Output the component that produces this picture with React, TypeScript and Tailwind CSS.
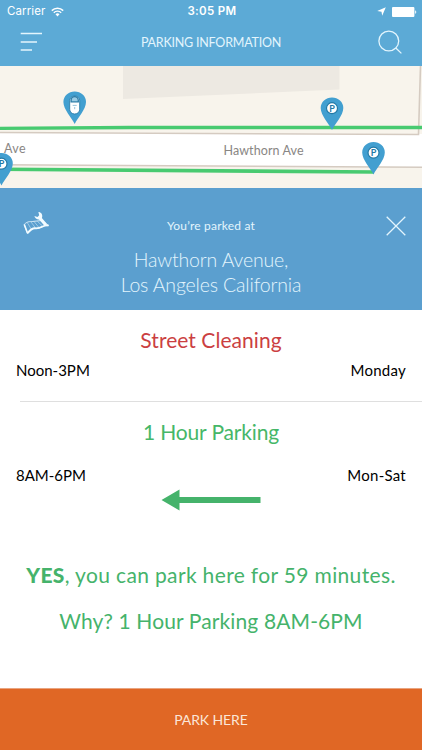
type PinKind = "meter" | "parking";

interface MapPin {
  id: string;
  kind: PinKind;
  x: number;
  y: number;
}

interface Rule {
  title: string;
  hours: string;
  days: string;
  titleClass: string;
}

// x / y are the tip of each pin inside the map
const pins: MapPin[] = [
  { id: "meter", kind: "meter", x: 74.7, y: 58 },
  { id: "north", kind: "parking", x: 332, y: 64 },
  { id: "south", kind: "parking", x: 373.5, y: 108.5 },
  { id: "west", kind: "parking", x: 1.5, y: 119.5 },
];

const cleaning: Rule = {
  title: "Street Cleaning",
  hours: "Noon-3PM",
  days: "Monday",
  titleClass: "text-[#cb3f42] tracking-[0.05px]",
};

const hourly: Rule = {
  title: "1 Hour Parking",
  hours: "8AM-6PM",
  days: "Mon-Sat",
  titleClass: "text-[#46b768] tracking-[-0.15px]",
};

function WifiIcon() {
  return (
    <svg width="13" height="10" viewBox="0 0 13 10" fill="none" stroke="#fff" aria-hidden="true">
      <path d="M0.8 3.6a8.1 8.1 0 0 1 11.4 0" strokeWidth="1.5" />
      <path d="M2.8 5.7a5.2 5.2 0 0 1 7.4 0" strokeWidth="1.4" />
      <path d="M6.5 9.4 4.5 7.3a2.9 2.9 0 0 1 4 0Z" fill="#fff" stroke="none" />
    </svg>
  );
}

function StatusBar() {
  return (
    <div className="grid h-[22px] grid-cols-3 items-center px-[7px] pt-px font-['Inter',sans-serif] text-[11.5px] leading-none text-white">
      <div className="flex items-center gap-[6px]">
        <span className="tracking-[0.1px]">Carrier</span>
        <WifiIcon />
      </div>
      <span className="pl-0.5 text-center font-semibold tracking-[0.35px]">3:05 PM</span>
      <div className="-mr-[2px] flex items-center justify-end gap-[6px]">
        <svg width="9" height="9" viewBox="0 0 9 9" fill="#fff" aria-hidden="true">
          <path d="M8.8 0.2 5.2 8.8 4.5 4.7 0.2 4Z" />
        </svg>
        <svg width="25" height="10" viewBox="0 0 25 10" fill="#fff" aria-hidden="true">
          <rect width="22.4" height="10" rx="1" />
          <path d="M23.2 3.2c1.4.4 1.4 3.2 0 3.6Z" />
        </svg>
      </div>
    </div>
  );
}

function Header() {
  return (
    <header className="h-[66px] shrink-0 bg-[#5caad6]">
      <StatusBar />
      <div className="grid h-10 grid-cols-[40px_1fr_40px] items-center px-5">
        <button type="button" aria-label="Menu">
          <svg width="22" height="20" viewBox="0 0 22 20" stroke="#e3f5fd" strokeWidth="1.5">
            <path d="M0.7 1.6h21.3M0.7 9.9h16.3M0.7 18h11.3" />
          </svg>
        </button>
        <h1 className="pt-0.5 text-center text-[12.5px] tracking-[-0.22px] whitespace-nowrap text-[#e3f5fd]">
          PARKING INFORMATION
        </h1>
        <button type="button" aria-label="Search" className="flex justify-end">
          <svg width="24" height="24" viewBox="0 0 24 24" fill="none" stroke="#e3f5fd" strokeWidth="1.3">
            <circle cx="10.8" cy="11" r="9.9" />
            <path d="m17.8 18 5.6 5.4" />
          </svg>
        </button>
      </div>
    </header>
  );
}

function Pin({ kind, x, y }: Omit<MapPin, "id">) {
  return (
    <g transform={`translate(${x} ${y})`}>
      <path
        d="M0 0C-3-6.500-11.300-14.500-11.300-22A11.300 10.500 0 0 1 11.300-22C11.300-14.500 3-6.500 0 0Z"
        fill="#429fd0"
      />
      {kind === "meter" ? (
        <g>
          <rect x="-5" y="-28" width="10" height="18" rx="4.800" fill="#fff" stroke="#2c7da8" strokeWidth="0.9" />
          <path
            d="M-3.600-22.200v-1.600a3.600 3.600 0 0 1 7.200 0v1.600Z"
            fill="#9acbe4"
            stroke="#2c7da8"
            strokeWidth="1.300"
          />
          <path d="M-2-18.600h4M0-17v2.200" stroke="#8dbdd6" strokeWidth="0.9" />
        </g>
      ) : (
        <g>
          <circle cy="-21.800" r="5.500" fill="#fff" stroke="#2379a5" strokeWidth="1.200" />
          <text
            y="-18.500"
            textAnchor="middle"
            className="fill-[#2379a5] font-['Lato',sans-serif] text-[9px] font-bold"
          >
            P
          </text>
        </g>
      )}
    </g>
  );
}

function StreetMap() {
  return (
    <svg width="422" height="122" viewBox="0 0 422 122" className="block shrink-0" role="img" aria-label="Map">
      <rect width="422" height="122" fill="#f8f4ec" />
      <path d="M123 0H339.500V23.500L123 33Z" fill="#ede9e2" />
      <path d="M0 66 422 68V101L0 98.500Z" fill="#fff" />
      <path d="M0 66.500 418.500 68.500 420.500 0" fill="none" stroke="#d5cbc1" strokeWidth="1.600" />
      <path d="M0 98.700 422 101.200" stroke="#d5cbc1" strokeWidth="1.600" />
      <path d="M0 62.300 130 61.500H422" fill="none" stroke="#48ca70" strokeWidth="3.300" />
      <path d="M0 103.200 374 106" stroke="#48ca70" strokeWidth="3.600" />
      <g className="fill-[#898684] font-['Lato',sans-serif] text-[12.5px]">
        <text x="4" y="87.200" textLength="21.500">Ave</text>
        <text x="223.500" y="88.600" textLength="80">Hawthorn Ave</text>
      </g>
      {pins.map((pin) => (
        <Pin key={pin.id} kind={pin.kind} x={pin.x} y={pin.y} />
      ))}
    </svg>
  );
}

function MapRepairIcon() {
  return (
    <svg width="27" height="24" viewBox="0 0 27 24" fill="none" stroke="#f2fbff" aria-hidden="true">
      <path
        d="M1.200 12.500C5 8.500 8 10 11 9.300L19 8.500 25.500 13.500C20 12.500 18.500 17 12.500 16.300 9 16 7 18.500 4.500 21.500Z"
        strokeWidth="0.800"
      />
      <path d="M4.500 21.300C7 18 9 15.900 12.500 16.300 18.500 17 20 12.300 25.500 13.500" strokeWidth="1.800" />
      <path d="M4.500 11 8.500 17.500M8 10 12.500 16M11 9.500 16 15.500M14.500 9.500 19.500 14" strokeWidth="0.450" />
      <path d="m1.300 12.500 3.300 8.800" strokeWidth="1.600" />
      <path d="m16.800 6 5.400 6.200" strokeWidth="3.200" strokeLinecap="round" />
      <path
        d="M15.300-0.300c3.500.7 4.800 3.600 3.400 6.600-2.700 2.300-6.500 1-7.300-2.300l3.100 1.100 1.700-1.900Z"
        fill="#f2fbff"
        stroke="none"
      />
    </svg>
  );
}

function LocationPanel() {
  return (
    <section className="grid h-[122px] shrink-0 grid-cols-[60px_1fr_60px] bg-[#5b9fcf] text-[#e3f5fd]">
      <div className="pt-[24px] pl-[23px]">
        <MapRepairIcon />
      </div>
      <div className="text-center">
        <p className="pt-[29px] text-[12px] leading-[18px] tracking-[0.2px]">You’re parked at</p>
        <p className="mt-3 text-[19.5px] leading-[25px] font-light tracking-[-0.15px]">
          Hawthorn Avenue,
          <br />
          Los Angeles California
        </p>
      </div>
      <button type="button" aria-label="Close" className="flex items-start justify-end pt-7 pr-4">
        <svg width="20" height="20" viewBox="0 0 20 20" stroke="#e3f5fd" strokeWidth="1.300">
          <path d="m0.700 0.700 18.600 18.600M19.300 0.700.700 19.300" />
        </svg>
      </button>
    </section>
  );
}

function RuleTimes({ hours, days }: Pick<Rule, "hours" | "days">) {
  return (
    <div className="flex justify-between px-4 text-[15px] leading-5 text-black">
      <span>{hours}</span>
      <span className="tracking-[0.25px]">{days}</span>
    </div>
  );
}

export default function App() {
  return (
    <main className="flex h-[750px] w-[422px] flex-col overflow-hidden bg-white font-['Lato',sans-serif]">
      <Header />
      <StreetMap />
      <LocationPanel />

      <section className="flex h-[92px] shrink-0 flex-col text-center">
        <h2 className={`pt-[17px] text-[21px] leading-[26px] ${cleaning.titleClass}`}>{cleaning.title}</h2>
        <div className="pt-[7px]">
          <RuleTimes hours={cleaning.hours} days={cleaning.days} />
        </div>
        <div className="mt-auto ml-5 h-px bg-[#dfdfdf]" />
      </section>

      <section className="flex h-[153px] shrink-0 flex-col text-center">
        <h2 className={`pt-[17px] text-[21px] leading-[26px] ${hourly.titleClass}`}>{hourly.title}</h2>
        <div className="pt-[20px]">
          <RuleTimes hours={hourly.hours} days={hourly.days} />
        </div>
        <svg width="100" height="22" viewBox="0 0 100 22" fill="#45b36b" className="mx-auto mt-[4px]" aria-hidden="true">
          <path d="M0.500 11 18.500 0.500V8h81v6h-81v7.500Z" />
        </svg>
      </section>

      <section className="grow text-center text-[21px] leading-[26px] text-[#45b36b]">
        <p className="pt-[7px] tracking-[0.35px] whitespace-nowrap">
          <strong className="font-black">YES</strong>, you can park here for 59 minutes.
        </p>
        <p className="mt-5 tracking-[0.12px]">Why? 1 Hour Parking 8AM-6PM</p>
      </section>

      <button
        type="button"
        className="h-[62px] shrink-0 border-t border-[#e9a47f] bg-[#e06725] text-[14px] tracking-[-0.1px] text-[#fbe6d8]"
      >
        PARK HERE
      </button>
    </main>
  );
}
